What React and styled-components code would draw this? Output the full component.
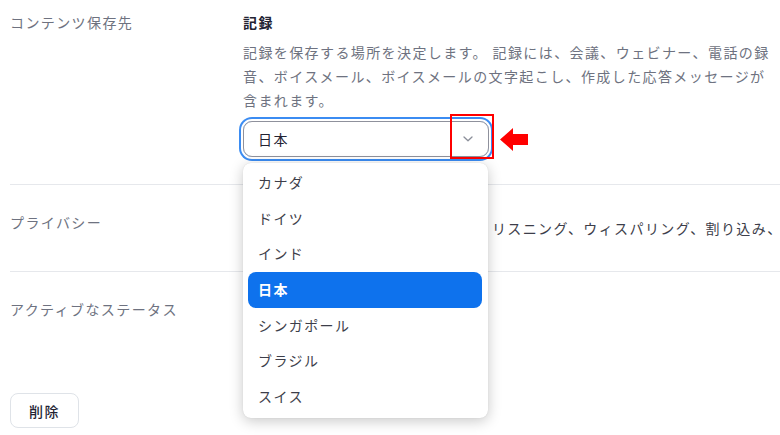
import React from "react";
import styled, { createGlobalStyle } from "styled-components";

const Global = createGlobalStyle`
  html, body { margin: 0; padding: 0; background: #fff; }
  body {
    font-family: "Noto Sans CJK JP", "Noto Sans", sans-serif;
    font-size: 14px;
    letter-spacing: 1.4px;
    color: #232333;
    overflow: hidden;
  }
  * { box-sizing: border-box; }
`;

const Page = styled.div`
  width: 780px;
  height: 435px;
  padding-left: 10px;
  overflow: hidden;
`;

const Section = styled.div`
  display: grid;
  grid-template-columns: 233px 1fr;
  align-items: start;
  padding: ${(p) => p.$pad};
  border-bottom: ${(p) => (p.$divider ? "1px solid #e6e8ec" : "none")};
`;

const Label = styled.div`
  line-height: 24px;
  color: #6e7280;
`;

const Content = styled.div`
  min-width: 0;
  margin-top: ${(p) => p.$offset || 0}px;
`;

const Title = styled.div`
  font-weight: 700;
  line-height: 24px;
  color: #232333;
`;

const Desc = styled.div`
  margin-top: 6px;
  line-height: 24px;
  color: #6e7280;
  white-space: nowrap;
`;

const SelectWrap = styled.div`
  position: relative;
  margin-top: 9px;
  width: 246px;
`;

const SelectBox = styled.div`
  height: 36px;
  border: 1px solid #8f919c;
  border-radius: 9px;
  box-shadow: 0 0 0 2px #fff, 0 0 0 4px #3b8cf2;
  display: flex;
  align-items: center;
  justify-content: space-between;
  padding: 0 15px 0 14px;
  color: #232333;
`;

const Chevron = () => (
  <svg width="10" height="6" viewBox="0 0 10 6" fill="none">
    <path d="M1 1 L5 4.8 L9 1" stroke="#8a8e99" strokeWidth="1.3" strokeLinecap="round" strokeLinejoin="round" />
  </svg>
);

const Menu = styled.ul`
  position: absolute;
  top: calc(100% + 6px);
  left: 0;
  width: 245px;
  margin: 0;
  padding: 2px 6px 3px 5px;
  list-style: none;
  background: #fff;
  border-radius: 8px;
  box-shadow: 0 3px 14px rgba(0, 0, 0, 0.22), 0 0 1px rgba(0, 0, 0, 0.15);
  z-index: 10;
`;

const Option = styled.li`
  height: 35.7px;
  display: flex;
  align-items: center;
  padding: 0 0 2px 10px;
  border-radius: 8px;
  background: ${(p) => (p.$active ? "#0e72ed" : "transparent")};
  color: ${(p) => (p.$active ? "#fff" : "#3d3e4a")};
  font-weight: ${(p) => (p.$active ? 700 : 400)};
`;

const RedBox = styled.div`
  position: absolute;
  left: 207px;
  top: -7px;
  width: 44px;
  height: 45px;
  border: 2px solid #f00;
  z-index: 5;
`;

const Arrow = styled.svg`
  position: absolute;
  left: 257px;
  top: 7px;
  z-index: 5;
`;

const CheckRow = styled.div`
  display: flex;
  align-items: center;
  gap: 18px;
  height: 30px;
  white-space: nowrap;
  color: #3d3e4a;
`;

const Checkbox = styled.span`
  flex: none;
  width: 16px;
  height: 16px;
  border: 1px solid #8f919c;
  border-radius: 3px;
`;

const Toggle = styled.span`
  display: block;
  position: relative;
  width: 36px;
  height: 20px;
  border-radius: 10px;
  background: #0e72ed;
  &::after {
    content: "";
    position: absolute;
    right: 2px;
    top: 2px;
    width: 16px;
    height: 16px;
    border-radius: 50%;
    background: #fff;
  }
`;

const Footer = styled.div`
  padding-top: 72px;
`;

const Button = styled.button`
  width: 69px;
  height: 35px;
  border: 1px solid #dfe3e8;
  border-radius: 8px;
  background: #fff;
  font: inherit;
  letter-spacing: 1.4px;
  color: #232333;
  font-weight: 500;
  padding: 0;
`;

const options = ["カナダ", "ドイツ", "インド", "日本", "シンガポール", "ブラジル", "スイス"];

export default function App() {
  return (
    <>
      <Global />
      <Page>
        <Section $pad="10px 0 27px" $divider>
          <Label>コンテンツ保存先</Label>
          <Content>
            <Title>記録</Title>
            <Desc>
              記録を保存する場所を決定します。 記録には、会議、ウェビナー、電話の録
              <br />
              音、ボイスメール、ボイスメールの文字起こし、作成した応答メッセージが
              <br />
              含まれます。
            </Desc>
            <SelectWrap>
              <SelectBox>
                <span>日本</span>
                <Chevron />
              </SelectBox>
              <RedBox />
              <Arrow width="28" height="23" viewBox="0 0 28 23">
                <path d="M0 11.5 L13 0 L13 6 L28 6 L28 17 L13 17 L13 23 Z" fill="#f00" />
              </Arrow>
              <Menu>
                {options.map((o) => (
                  <Option key={o} $active={o === "日本"}>
                    {o}
                  </Option>
                ))}
              </Menu>
            </SelectWrap>
          </Content>
        </Section>
        <Section $pad="25px 0 28px" $divider>
          <Label>プライバシー</Label>
          <Content $offset={3}>
            <CheckRow>
              <Checkbox />
              <span>他のユーザーによる通話監視　リスニング、ウィスパリング、割り込み、</span>
            </CheckRow>
          </Content>
        </Section>
        <Section $pad="25px 0 0">
          <Label>アクティブなステータス</Label>
          <Content $offset={3}>
            <Toggle />
          </Content>
        </Section>
        <Footer>
          <Button>削除</Button>
        </Footer>
      </Page>
    </>
  );
}
